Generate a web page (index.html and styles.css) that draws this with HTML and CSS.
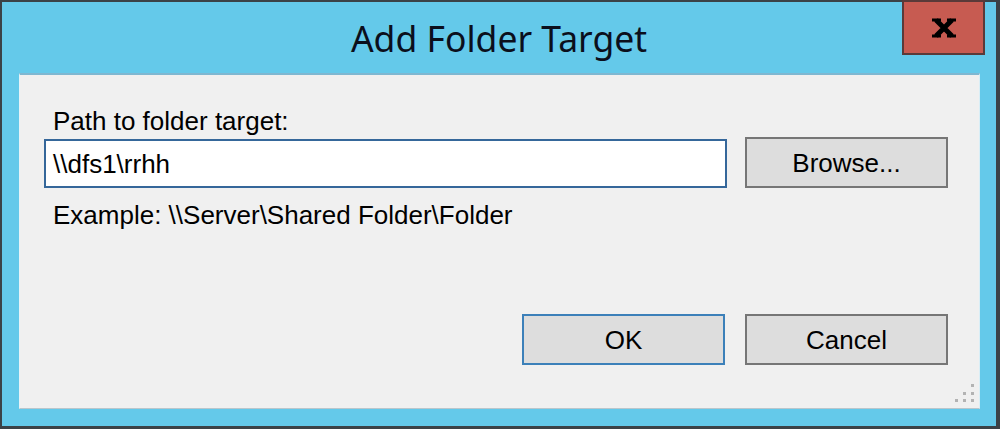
FILE: index.html
```html
<!DOCTYPE html>
<html>
<head>
<meta charset="utf-8">
<link rel="stylesheet" href="styles.css">
</head>
<body>
<div class="window">
  <div class="titlebar">
    <span class="title">Add Folder Target</span>
    <div class="close">
      <svg width="24" height="20" viewBox="0 0 24 20">
        <path d="M4 2 L20 18 M20 2 L4 18" stroke="#000" stroke-width="5" fill="none"/>
        <path d="M0 0.5 H9 V3.5 H0 Z M15 0.5 H24 V3.5 H15 Z M0 16.5 H9 V19.5 H0 Z M15 16.5 H24 V19.5 H15 Z" fill="#000"/>
      </svg>
    </div>
  </div>
  <div class="panel">
    <div class="label">Path to folder target:</div>
    <div class="row">
      <div class="field">\\dfs1\rrhh</div>
      <div class="btn">Browse...</div>
    </div>
    <div class="label example">Example: \\Server\Shared Folder\Folder</div>
    <div class="actions">
      <div class="btn default">OK</div>
      <div class="btn">Cancel</div>
    </div>
    <svg class="grip" width="22" height="22" viewBox="0 0 22 22">
      <g fill="#b3b3b3">
        <rect x="17" y="1" width="3" height="3"/>
        <rect x="9" y="9" width="3" height="3"/>
        <rect x="17" y="9" width="3" height="3"/>
        <rect x="1" y="16" width="3" height="3"/>
        <rect x="9" y="16" width="3" height="3"/>
        <rect x="17" y="16" width="3" height="3"/>
      </g>
    </svg>
  </div>
</div>
</body>
</html>
```

FILE: styles.css
```css
html, body {
  margin: 0;
  padding: 0;
  background: #3b4247;
  width: 1000px;
  height: 429px;
  overflow: hidden;
}

.window {
  margin: 2px 4px 3px 2px;
  width: 994px;
  height: 424px;
  background: #64c9ea;
  display: flex;
  flex-direction: column;
  position: relative;
}

.titlebar {
  height: 71px;
  display: flex;
  align-items: flex-start;
  justify-content: center;
}

.title {
  font-family: "Noto Sans", "Open Sans", sans-serif;
  font-size: 35.5px;
  line-height: 40px;
  margin-top: 16px;
  color: #0b0f1c;
}

.close {
  position: absolute;
  left: 900px;
  top: -2px;
  width: 79px;
  height: 51px;
  background: #c75b51;
  border: 2px solid #5a3a39;
  display: flex;
  align-items: center;
  justify-content: center;
}

.close svg {
  margin-top: 1px;
}

.panel {
  margin: 0 16px 17px 17px;
  height: 334px;
  background: #f0f0f0;
  border-top: 2px solid #7fb7d1;
  border-left: 1px solid #e6f3f8;
  border-right: 1px solid #d9eef6;
  border-bottom: 1px solid #b9c6cc;
  box-sizing: content-box;
  padding: 0 31px 0 24px;
  position: relative;
  font-family: "Liberation Sans", Arial, sans-serif;
  font-size: 26px;
  line-height: 30px;
  color: #000;
  display: flex;
  flex-direction: column;
}

.label {
  padding-left: 9px;
  margin-top: 31px;
}

.row {
  display: flex;
  align-items: flex-end;
  gap: 18px;
  margin-top: 1px;
}

.field {
  width: 672px;
  height: 45px;
  background: #fff;
  border: 2px solid #35679a;
  padding-left: 7px;
  line-height: 46px;
}

.btn {
  width: 199px;
  height: 47px;
  background: #dddddd;
  border: 2px solid #767676;
  text-align: center;
  line-height: 49px;
}

.btn.default {
  border-color: #3c80b9;
}

.example {
  margin-top: 12px;
}

.actions {
  display: flex;
  justify-content: flex-end;
  gap: 20px;
  margin-top: 84px;
}

.grip {
  position: absolute;
  right: 3px;
  bottom: 3px;
}
```
